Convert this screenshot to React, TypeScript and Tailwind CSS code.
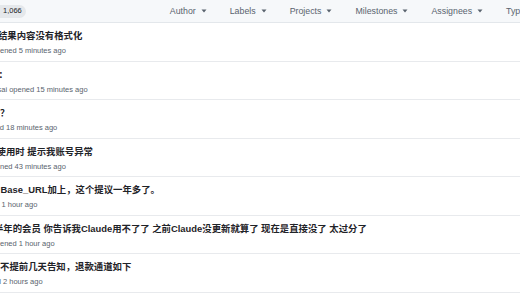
import React from "react";

const FONT = '"Liberation Sans", "Noto Sans CJK SC", Arial, sans-serif';

function Caret() {
  return (
    <svg width="6" height="4" viewBox="0 0 6 4" className="shrink-0">
      <path d="M0.5 0.5 L5.5 0.5 L3 3.5 Z" fill="#59636e" />
    </svg>
  );
}

function Filter({ label }: { label: string }) {
  return (
    <div className="flex items-center gap-[5px] shrink-0">
      <span className="text-[8.8px] leading-[12px] text-[#59636e]">{label}</span>
      <Caret />
    </div>
  );
}

type Row = { title: string; tOff: number; meta: string; mOff: number };

const rows: Row[] = [
  { title: "结果内容没有格式化", tOff: -2.1, meta: "ened 5 minutes ago", mOff: 0 },
  { title: "：", tOff: -1.5, meta: "sai opened 15 minutes ago", mOff: -2.5 },
  { title: "？", tOff: 0, meta: "d 18 minutes ago", mOff: -0.3 },
  { title: "使用时 提示我账号异常", tOff: -3.4, meta: "ned 43 minutes ago", mOff: 0 },
  { title: "Base_URL加上，这个提议一年多了。", tOff: 0.5, meta: "1 hour ago", mOff: 1.5 },
  {
    title: "半年的会员 你告诉我Claude用不了了 之前Claude没更新就算了 现在是直接没了 太过分了",
    tOff: -6.1,
    meta: "ened 1 hour ago",
    mOff: 0,
  },
  { title: "不提前几天告知，退款通道如下", tOff: 0, meta: "d 2 hours ago", mOff: -3.3 },
];

export default function App() {
  return (
    <div
      className="w-[520px] h-[293px] overflow-hidden bg-white text-[#1f2328]"
      style={{ fontFamily: FONT }}
    >
      <div className="h-[23px] bg-[#f6f8fa] border-b border-[#e3e7eb] flex items-center whitespace-nowrap">
        <div className="h-[13px] ml-[-6px] pl-[9px] pr-[4px] rounded-full bg-[#e5e8eb] flex items-center text-[7.5px] font-medium text-[#1f2328] shrink-0">
          1,066
        </div>
        <div className="ml-[144px] flex items-center gap-[23px]">
          <Filter label="Author" />
          <Filter label="Labels" />
          <Filter label="Projects" />
          <Filter label="Milestones" />
          <Filter label="Assignees" />
          <Filter label="Types" />
        </div>
      </div>
      {rows.map((r, i) => (
        <div
          key={i}
          className="h-[38.5px] border-b border-[#e8eaed] flex flex-col pt-[7px] whitespace-nowrap"
        >
          <div
            className="text-[9.4px] leading-[12px] font-semibold text-[#1f2328]"
            style={{ marginLeft: r.tOff }}
          >
            {r.title}
          </div>
          <div
            className="mt-[4px] text-[7.5px] leading-[10px] text-[#59636e]"
            style={{ marginLeft: r.mOff }}
          >
            {r.meta}
          </div>
        </div>
      ))}
    </div>
  );
}
